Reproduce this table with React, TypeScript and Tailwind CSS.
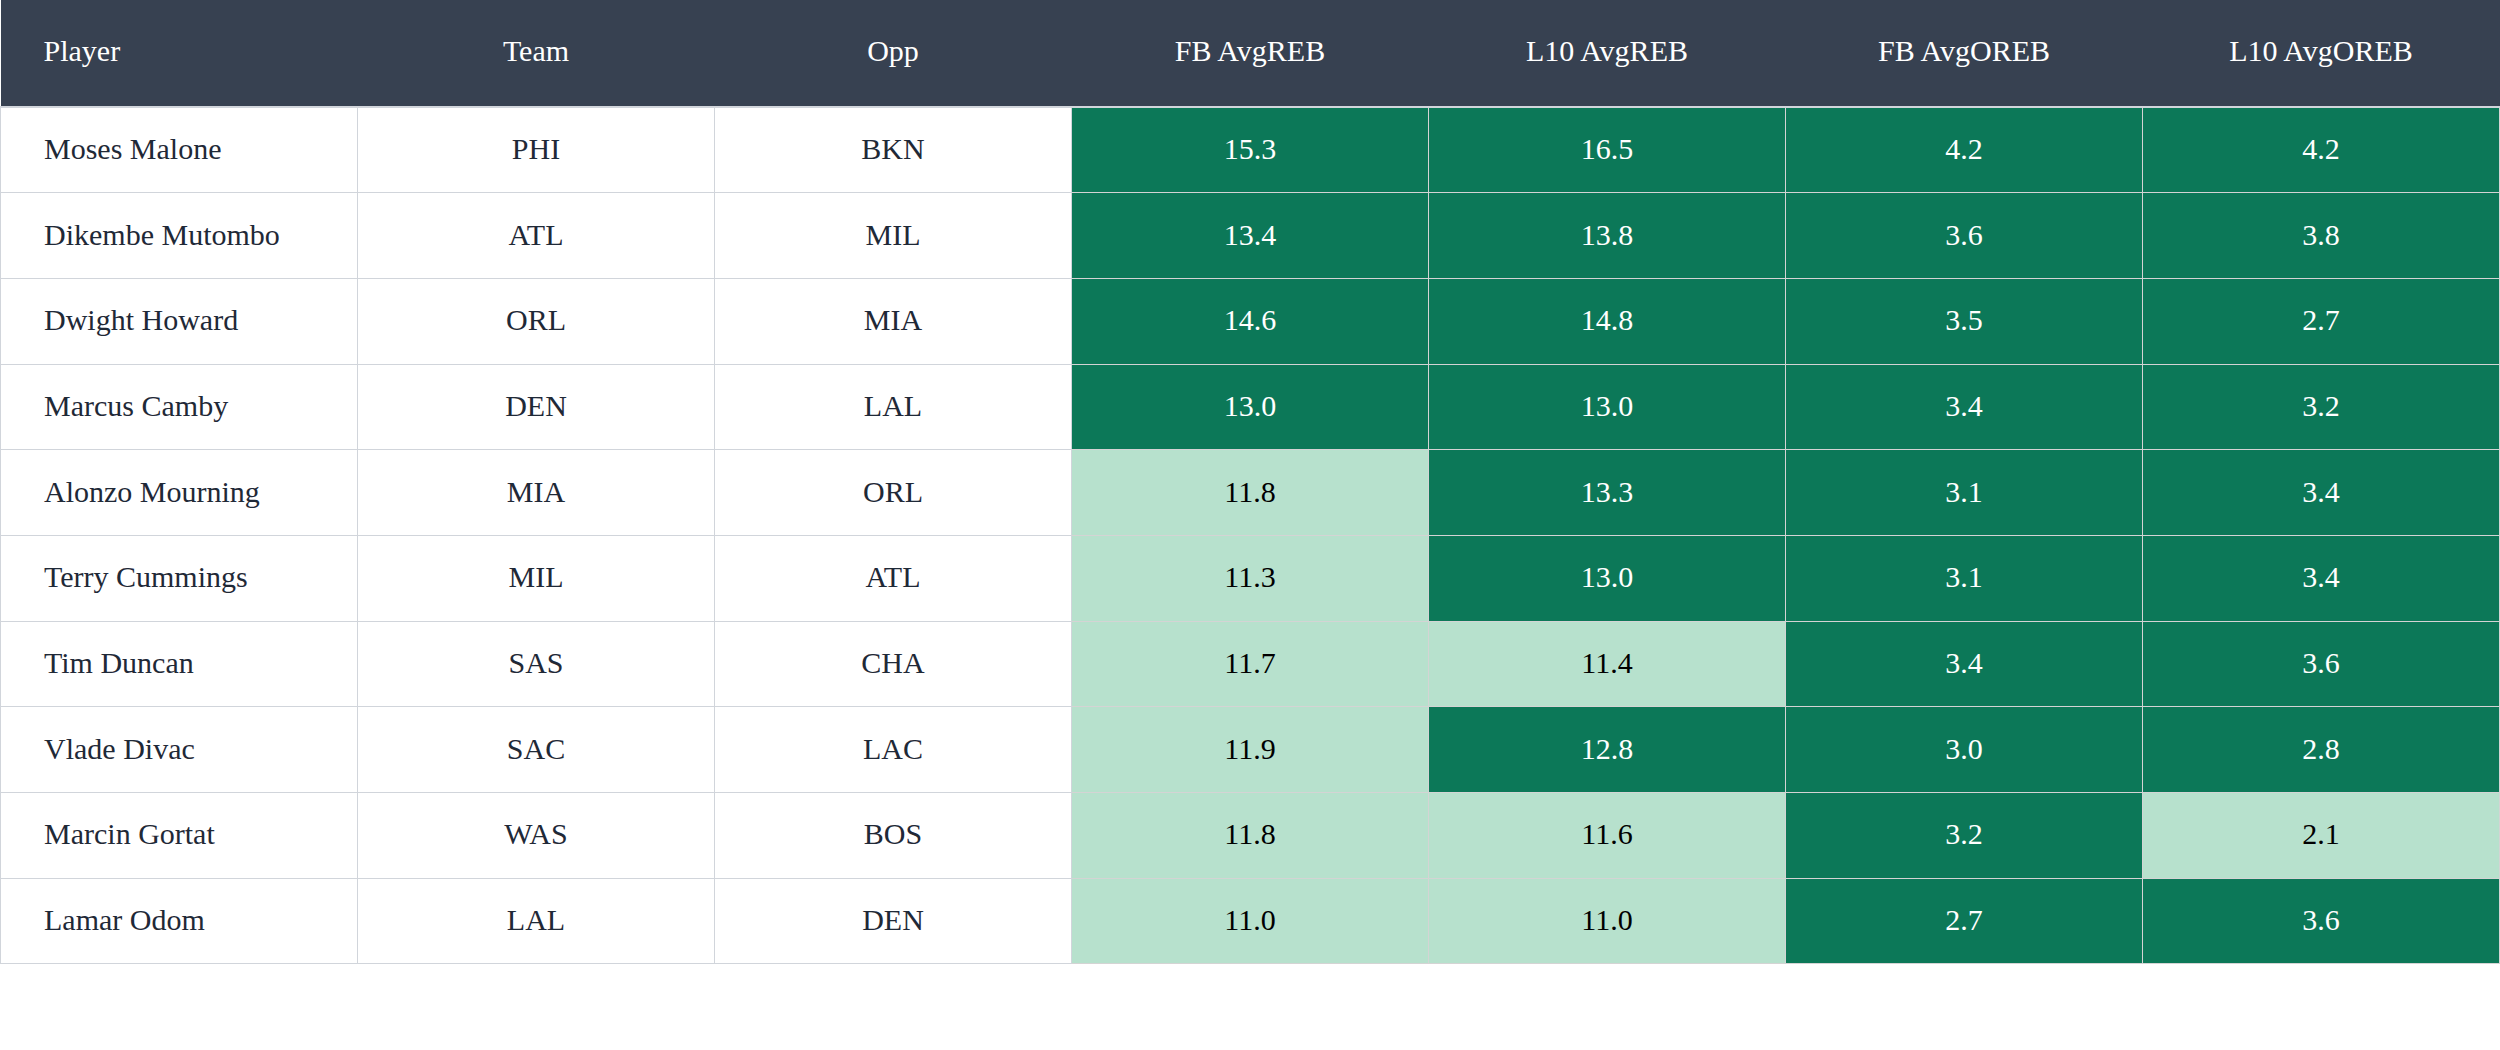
type Row = {
  player: string;
  team: string;
  opp: string;
  fbReb: number;
  l10Reb: number;
  fbOreb: number;
  l10Oreb: number;
};

const rows: Row[] = [
  { player: "Moses Malone", team: "PHI", opp: "BKN", fbReb: 15.3, l10Reb: 16.5, fbOreb: 4.2, l10Oreb: 4.2 },
  { player: "Dikembe Mutombo", team: "ATL", opp: "MIL", fbReb: 13.4, l10Reb: 13.8, fbOreb: 3.6, l10Oreb: 3.8 },
  { player: "Dwight Howard", team: "ORL", opp: "MIA", fbReb: 14.6, l10Reb: 14.8, fbOreb: 3.5, l10Oreb: 2.7 },
  { player: "Marcus Camby", team: "DEN", opp: "LAL", fbReb: 13.0, l10Reb: 13.0, fbOreb: 3.4, l10Oreb: 3.2 },
  { player: "Alonzo Mourning", team: "MIA", opp: "ORL", fbReb: 11.8, l10Reb: 13.3, fbOreb: 3.1, l10Oreb: 3.4 },
  { player: "Terry Cummings", team: "MIL", opp: "ATL", fbReb: 11.3, l10Reb: 13.0, fbOreb: 3.1, l10Oreb: 3.4 },
  { player: "Tim Duncan", team: "SAS", opp: "CHA", fbReb: 11.7, l10Reb: 11.4, fbOreb: 3.4, l10Oreb: 3.6 },
  { player: "Vlade Divac", team: "SAC", opp: "LAC", fbReb: 11.9, l10Reb: 12.8, fbOreb: 3.0, l10Oreb: 2.8 },
  { player: "Marcin Gortat", team: "WAS", opp: "BOS", fbReb: 11.8, l10Reb: 11.6, fbOreb: 3.2, l10Oreb: 2.1 },
  { player: "Lamar Odom", team: "LAL", opp: "DEN", fbReb: 11.0, l10Reb: 11.0, fbOreb: 2.7, l10Oreb: 3.6 },
];

function StatCell({ value, high }: { value: number; high: boolean }) {
  return (
    <td
      className={
        high
          ? "border border-[#d4d4d4] bg-[#0c7858] text-white text-center pb-[3px]"
          : "border border-[#d4d4d4] bg-[#b7e1cd] text-black text-center pb-[3px]"
      }
    >
      {value.toFixed(1)}
    </td>
  );
}

export default function App() {
  return (
    <div className="w-[2500px] h-[1050px] bg-white font-['Georgia','Liberation_Serif',serif] text-[30px]">
      <table className="w-full table-fixed border-collapse">
        <thead>
          <tr className="h-[107px] bg-[#374151] text-white">
            <th className="font-normal text-left pl-[43px] pb-[6px] border-b-2 border-[#d1d5db]">Player</th>
            <th className="font-normal text-center pb-[6px] border-b-2 border-[#d1d5db]">Team</th>
            <th className="font-normal text-center pb-[6px] border-b-2 border-[#d1d5db]">Opp</th>
            <th className="font-normal text-center pb-[6px] border-b-2 border-[#d1d5db]">FB AvgREB</th>
            <th className="font-normal text-center pb-[6px] border-b-2 border-[#d1d5db]">L10 AvgREB</th>
            <th className="font-normal text-center pb-[6px] border-b-2 border-[#d1d5db]">FB AvgOREB</th>
            <th className="font-normal text-center pb-[6px] border-b-2 border-[#d1d5db]">L10 AvgOREB</th>
          </tr>
        </thead>
        <tbody>
          {rows.map((r) => (
            <tr key={r.player} className="h-[85.7px]">
              <td className="border border-[#d1d5db] pl-[43px] pb-[3px] text-[#1f2937]">{r.player}</td>
              <td className="border border-[#d1d5db] text-center pb-[3px] text-[#1f2937]">{r.team}</td>
              <td className="border border-[#d1d5db] text-center pb-[3px] text-[#1f2937]">{r.opp}</td>
              <StatCell value={r.fbReb} high={r.fbReb > 12} />
              <StatCell value={r.l10Reb} high={r.l10Reb > 12} />
              <StatCell value={r.fbOreb} high={r.fbOreb > 2.5} />
              <StatCell value={r.l10Oreb} high={r.l10Oreb > 2.5} />
            </tr>
          ))}
        </tbody>
      </table>
    </div>
  );
}
